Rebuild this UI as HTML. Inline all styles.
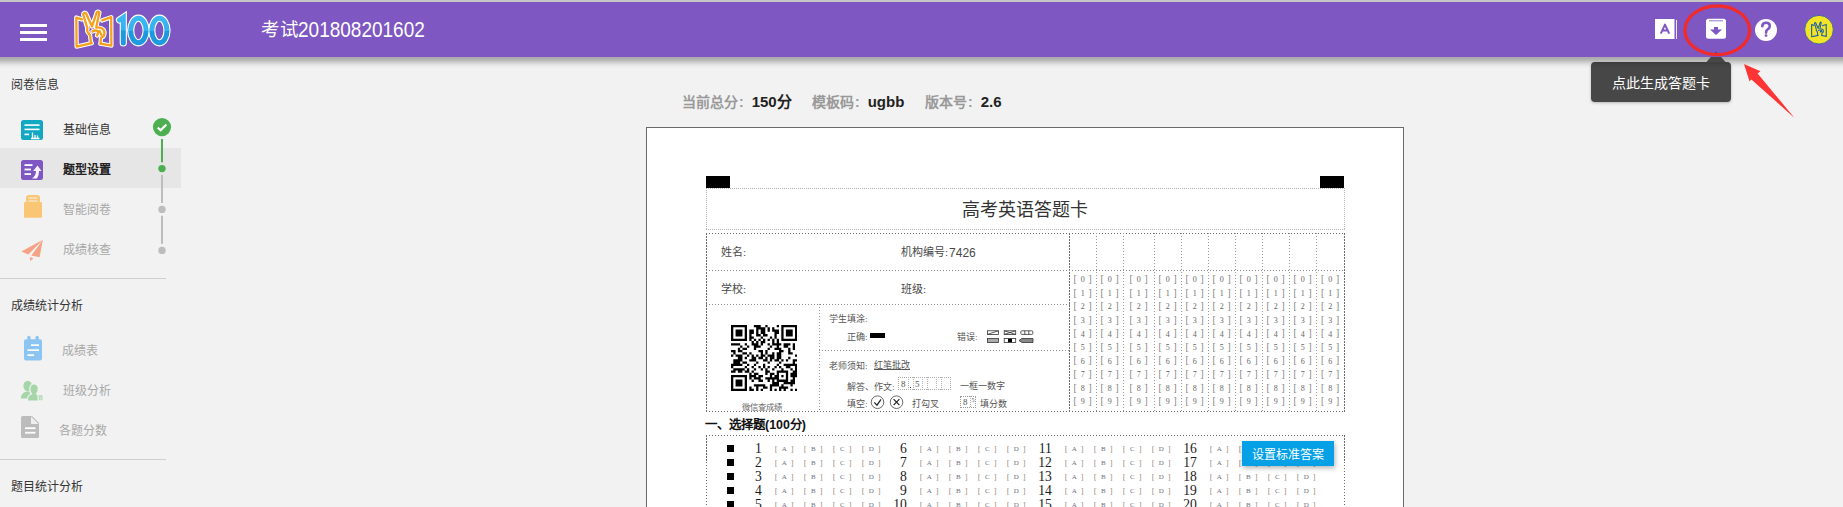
<!DOCTYPE html><html lang="zh-CN"><head><meta charset="utf-8"><style>
*{box-sizing:border-box;margin:0;padding:0}
html,body{width:1843px;height:507px;overflow:hidden;background:#f2f2f2;font-family:"Liberation Sans",sans-serif;position:relative}
div,span,svg{position:absolute}
.t{white-space:nowrap;line-height:1}
#hdr{left:-10px;top:2px;width:1863px;height:55px;background:#7e57c2;box-shadow:0 5px 6px rgba(0,0,0,.32);z-index:2}
.bar{left:30px;width:27px;height:3px;background:#fff}
.sbh{left:11px;font-size:12px;color:#333}
.item{font-size:12px}
.div{left:0;width:166px;height:1px;background:#cfcfcf}
.hd1{height:1px;background:repeating-linear-gradient(90deg,#b4b4b4 0 1px,transparent 1px 2px)}
.vd1{width:1px;background:repeating-linear-gradient(180deg,#b4b4b4 0 1px,transparent 1px 2px)}
.hd2{height:1px;background:repeating-linear-gradient(90deg,#6a6a6a 0 1.5px,transparent 1.5px 3px)}
.vd2{width:1px;background:repeating-linear-gradient(180deg,#6a6a6a 0 1.5px,transparent 1.5px 3px)}
.hd3{height:1px;background:repeating-linear-gradient(90deg,#8c8c8c 0 1px,transparent 1px 3px)}
.vd3{width:1px;background:repeating-linear-gradient(180deg,#999 0 1px,transparent 1px 3px)}
.ser{font-family:"Liberation Serif",serif}
.dg{font-size:8px;color:#666;font-family:"Liberation Serif",serif}
.br{font-size:9.5px;color:#7a7a7a;font-family:"Liberation Serif",serif}
.obr{font-size:8.5px;color:#a08c80;font-family:"Liberation Serif",serif}
.op{font-size:7px;color:#707080;font-family:"Liberation Serif",serif}
.num{font-size:13.6px;color:#1a1a1a;font-family:"Liberation Serif",serif;text-align:right;width:30px}
.sq{width:7px;height:7px;background:#000}
</style></head><body>
<div style="left:0;top:0;width:1843px;height:2px;background:#c8c8c8"></div>
<div id="hdr">
<div class="bar" style="top:22px"></div>
<div class="bar" style="top:29px"></div>
<div class="bar" style="top:36px"></div>
</div>
<svg style="left:66px;top:5px;z-index:3" width="110" height="50" viewBox="66 5 110 50">
<g fill="none" stroke-linejoin="round" stroke-linecap="round">
<g stroke="#fff" stroke-width="4.4">
<path d="M81.8 19.4 L76.3 17.6 L76.6 46.6 L91.8 43.2"/>
<path d="M102.2 20.4 L111.2 17.2 L111.4 45.6 L100.5 43.6"/>
<path d="M91 42.5 L90 35 Q86 31 87.5 28.5 L83.2 14.5 Q83.5 12 86 13.2 L92 26.5 L96.8 12.3 Q98.2 10.8 99.4 12.5 L96.2 27.5 Q101 27.2 103.5 29.5 Q105.5 33 103.5 36.5 L101 37.8 L100.6 43.6"/>
<path d="M92.5 31.5 Q95 29.5 98.5 31.5 L97 35.5 M99.5 31 L101.5 35"/>
</g>
<g stroke="#f5a11c" stroke-width="2.3">
<path d="M81.8 19.4 L76.3 17.6 L76.6 46.6 L91.8 43.2"/>
<path d="M102.2 20.4 L111.2 17.2 L111.4 45.6 L100.5 43.6"/>
<path d="M91 42.5 L90 35 Q86 31 87.5 28.5 L83.2 14.5 Q83.5 12 86 13.2 L92 26.5 L96.8 12.3 Q98.2 10.8 99.4 12.5 L96.2 27.5 Q101 27.2 103.5 29.5 Q105.5 33 103.5 36.5 L101 37.8 L100.6 43.6"/>
<path d="M92.5 31.5 Q95 29.5 98.5 31.5 L97 35.5 M99.5 31 L101.5 35"/>
</g>
</g>
<defs><linearGradient id="bl" x1="0" y1="0" x2="0" y2="1"><stop offset="0" stop-color="#3db8f0"/><stop offset=".5" stop-color="#34b0ec"/><stop offset=".52" stop-color="#1c98dd"/><stop offset="1" stop-color="#1e9be0"/></linearGradient></defs>
<g fill="none" stroke="#fff" stroke-width="7.2" stroke-linecap="round">
<path d="M119.5 20 L123.3 17.5 L123.3 43"/>
<ellipse cx="138.4" cy="30.5" rx="7.7" ry="12.3"/>
<ellipse cx="159.4" cy="30.5" rx="7.6" ry="12.3"/>
</g>
<g fill="none" stroke="url(#bl)" stroke-width="5" stroke-linecap="round">
<path d="M119.5 20 L123.3 17.5 L123.3 43"/>
<ellipse cx="138.4" cy="30.5" rx="7.7" ry="12.3"/>
<ellipse cx="159.4" cy="30.5" rx="7.6" ry="12.3"/>
</g>
</svg>
<div class="t" style="left:260.5px;top:20.5px;color:#fff;font-size:18.5px;z-index:3">考试</div>
<div class="t" style="left:298px;top:19px;color:#fff;font-size:19px;z-index:3;transform:scaleY(1.12);transform-origin:0 0">201808201602</div>
<svg style="left:1650px;top:2px;z-index:3" width="193" height="55" viewBox="1650 2 193 55">
<rect x="1655" y="19" width="19.5" height="20" fill="#fff"/>
<rect x="1676" y="20" width="1" height="19" fill="#fff" opacity=".85"/>
<path d="M1660.8 33.6 L1665 24.6 L1669.2 33.6 M1662.4 30.4 H1667.6" stroke="#7e57c2" stroke-width="2" fill="none" stroke-linejoin="round"/>
<rect x="1706" y="18.7" width="20" height="20" rx="2.5" fill="#fff"/>
<rect x="1709" y="20.3" width="14" height="1" fill="#7e57c2" opacity=".8"/>
<path d="M1714 27 H1718 V29.5 H1722 L1716 35 L1710 29.5 H1714 Z" fill="#7e57c2"/>
<circle cx="1766" cy="30" r="11" fill="#fff"/>
<path d="M1762.3 26.3 Q1762.3 22.8 1766.2 22.8 Q1769.8 22.8 1769.8 26 Q1769.8 28.2 1767.6 29.3 Q1766.1 30.1 1766.1 32.6" stroke="#7e57c2" stroke-width="2.6" fill="none" stroke-linecap="round"/>
<circle cx="1766" cy="35.6" r="1.4" fill="#7e57c2"/>
<circle cx="1819" cy="29.7" r="14.3" fill="#f3e526" stroke="#2a5aa8" stroke-width=".8"/>
<g transform="translate(1819 29.6) scale(0.42) translate(-94 -29.5)" fill="none" stroke="#1d5fa8" stroke-width="2.6" stroke-linejoin="round" stroke-linecap="round">
<path d="M81.8 19.4 L76.3 17.6 L76.6 46.6 L91.8 43.2"/>
<path d="M102.2 20.4 L111.2 17.2 L111.4 45.6 L100.5 43.6"/>
<path d="M91 42.5 L90 35 Q86 31 87.5 28.5 L83.2 14.5 Q83.5 12 86 13.2 L92 26.5 L96.8 12.3 Q98.2 10.8 99.4 12.5 L96.2 27.5 Q101 27.2 103.5 29.5 Q105.5 33 103.5 36.5 L101 37.8 L100.6 43.6"/>
<path d="M92.5 31.5 Q95 29.5 98.5 31.5 L97 35.5 M99.5 31 L101.5 35"/>
</g>
<ellipse cx="1717.3" cy="30.2" rx="32.3" ry="24.4" fill="none" stroke="#f22a2a" stroke-width="3.3"/>
</svg>
<div style="left:1591px;top:62px;width:140px;height:40px;background:#474747;border-radius:4px;z-index:1;box-shadow:0 1px 3px rgba(0,0,0,.25)"></div>
<svg style="left:1704px;top:50px;z-index:3" width="24" height="13" viewBox="1704 50 24 13"><path d="M1706 62.5 L1710.8 57 L1721.2 57 L1726 62.5 Z" fill="#474747"/><circle cx="1716" cy="52.6" r=".9" fill="#474747" opacity=".8"/></svg>
<div class="t" style="left:1612px;top:76px;color:#fff;font-size:14px;z-index:3">点此生成答题卡</div>
<svg style="left:1735px;top:55px;z-index:3" width="70" height="70" viewBox="1735 55 70 70"><path d="M1744 64 L1760.5 71.3 L1757.6 73.4 L1794.5 118 L1751.4 79.5 L1749.5 81.3 Z" fill="#ff3535"/></svg>
<div class="t sbh" style="top:79px">阅卷信息</div>
<div style="left:0;top:148px;width:181px;height:40px;background:#e6e6e6"></div>
<div class="t item" style="left:63px;top:123.7px;color:#333;">基础信息</div>
<div class="t item" style="left:63px;top:163.5px;color:#222;font-weight:bold;">题型设置</div>
<div class="t item" style="left:63px;top:204px;color:#a8a8a8;">智能阅卷</div>
<div class="t item" style="left:63px;top:244px;color:#a8a8a8;">成绩核查</div>
<svg style="left:18px;top:116px" width="28" height="148" viewBox="18 116 28 148">
<rect x="21" y="120" width="22" height="20" rx="2.5" fill="#12a8c2"/>
<rect x="24.5" y="124.3" width="15" height="1.6" fill="#fff"/>
<rect x="24.5" y="128.6" width="15" height="1.6" fill="#fff"/>
<rect x="24.5" y="133.6" width="4.5" height="1.6" fill="#fff"/>
<path d="M31 138.5 H39.5 M32.5 138.5 V132.5 M35 138.5 V135 M37.5 138.5 V135.5" stroke="#fff" stroke-width="1.3" fill="none"/>
<rect x="21" y="160" width="22" height="20" rx="2.5" fill="#7e57c2"/>
<rect x="24.5" y="164.2" width="8" height="1.8" fill="#fff"/>
<rect x="24.5" y="168.6" width="6.5" height="1.8" fill="#fff"/>
<rect x="24.5" y="173.2" width="6.5" height="1.8" fill="#fff"/>
<path d="M37.5 165.5 L41.5 171 L39 171 Q39 176 37 178.5 L32 178.5 Q36 176 36 171 L33.2 171 Z" fill="#fff" opacity=".95"/>
<rect x="26" y="195" width="14" height="8" rx="3" fill="#f9c676"/>
<rect x="28.5" y="197.3" width="9" height="1.4" fill="#f6e6cc"/>
<rect x="28.5" y="200.3" width="9" height="1.4" fill="#f6e6cc"/>
<rect x="24" y="202" width="18" height="15.8" rx="1" fill="#f9c676"/>
<path d="M42.9 239.8 L21.3 251.4 L28.4 254.4 Z M42.9 239.8 L31.3 255.6 L39.6 257.3 Z M30 257 L33.6 258.6 L30.2 261 Z" fill="#f5a385"/>
</svg>
<svg style="left:150px;top:116px" width="24" height="140" viewBox="150 116 24 140">
<circle cx="162" cy="127.1" r="9.1" fill="#4caf50"/>
<path d="M157.7 127.5 L160.6 130.3 L166.4 124.4" stroke="#fff" stroke-width="2.2" fill="none"/>
<rect x="161" y="139" width="2" height="23.3" fill="#4caf50"/>
<circle cx="162" cy="168.6" r="3.7" fill="#4caf50"/>
<rect x="161" y="175" width="2" height="28" fill="#bdbdbd"/>
<circle cx="162" cy="209.4" r="3.7" fill="#bdbdbd"/>
<rect x="161" y="215.8" width="2" height="28" fill="#bdbdbd"/>
<circle cx="162" cy="250.4" r="3.7" fill="#bdbdbd"/>
</svg>
<div class="div" style="top:278px"></div>
<div class="t sbh" style="top:300px">成绩统计分析</div>
<div class="t item" style="left:62px;top:345px;color:#a8a8a8">成绩表</div>
<div class="t item" style="left:63px;top:384.7px;color:#a8a8a8">班级分析</div>
<div class="t item" style="left:59px;top:425px;color:#a8a8a8">各题分数</div>
<svg style="left:18px;top:334px" width="30" height="108" viewBox="18 334 30 108">
<rect x="24" y="339.3" width="18" height="21.3" rx="2" fill="#8cc5f2"/>
<rect x="27.3" y="335.8" width="3.2" height="5" rx="1.5" fill="#8cc5f2"/>
<rect x="35.5" y="335.8" width="3.2" height="5" rx="1.5" fill="#8cc5f2"/>
<rect x="31" y="344.3" width="8" height="1.7" fill="#fff"/>
<rect x="27.5" y="349.3" width="11.5" height="1.7" fill="#fff"/>
<rect x="27.5" y="354.3" width="6.5" height="1.7" fill="#fff"/>
<g fill="#a6d6a8">
<ellipse cx="27.7" cy="386" rx="4.3" ry="5.2"/>
<path d="M20.8 398.5 Q21 392.5 27 391.5 L30 391.5 L31 398.5 Z"/>
</g>
<g fill="#a6d6a8" stroke="#f2f2f2" stroke-width="1.2">
<path d="M27.3 401 Q27.3 395 31.5 394 Q29.5 391.5 29.8 388.5 Q30.3 384 34 384 Q38 384 38.3 388.5 Q38.5 391.5 36.5 394 Q38.5 394.5 38.5 397 V401 Z"/>
<rect x="38.2" y="394.6" width="4.8" height="6.2" rx=".8"/>
</g>
<path d="M39.5 397 H41.6 M39.5 399 H41.6" stroke="#fff" stroke-width=".8"/>
<path d="M21 417.5 Q21 416 22.5 416 H32 L39 423 V436.5 Q39 438 37.5 438 H22.5 Q21 438 21 436.5 Z" fill="#bcbcbc"/>
<path d="M31 416.5 V424 H38.5 Z" fill="#efefef"/>
<rect x="25" y="427.3" width="10.5" height="1.8" fill="#fff"/>
<rect x="25" y="431.8" width="10.5" height="1.8" fill="#fff"/>
</svg>
<div class="div" style="top:459px"></div>
<div class="t sbh" style="top:481px">题目统计分析</div>
<div class="t" style="left:682px;top:94px;font-size:14px;font-weight:bold;color:#999">当前总分<span style="position:static;margin-left:1px">:</span><span style="position:static;color:#222;font-size:15px;margin-left:8px">150分</span></div>
<div class="t" style="left:812px;top:94px;font-size:14px;font-weight:bold;color:#999">模板码<span style="position:static;margin-left:1px">:</span><span style="position:static;color:#222;font-size:15px;margin-left:8px">ugbb</span></div>
<div class="t" style="left:925px;top:94px;font-size:14px;font-weight:bold;color:#999">版本号<span style="position:static;margin-left:1px">:</span><span style="position:static;color:#222;font-size:15px;margin-left:8px">2.6</span></div>
<div style="left:646px;top:127px;width:758px;height:390px;background:#fff;border:1px solid #6a6a6a"></div>
<div style="left:706px;top:176px;width:24px;height:12px;background:#000"></div>
<div style="left:1320px;top:176px;width:24px;height:12px;background:#000"></div>
<div class="hd1" style="left:706px;top:188px;width:639px"></div>
<div class="hd1" style="left:706px;top:229px;width:639px"></div>
<div class="vd1" style="left:706px;top:188px;height:42px"></div>
<div class="vd1" style="left:1344px;top:188px;height:42px"></div>
<div class="t ser" style="left:962px;top:201px;font-size:18px;color:#333;width:126px;text-align:center">高考英语答题卡</div>
<div class="hd2" style="left:706px;top:233px;width:639px"></div>
<div class="hd2" style="left:706px;top:411px;width:639px"></div>
<div class="vd2" style="left:706px;top:233px;height:179px"></div>
<div class="vd2" style="left:1344px;top:233px;height:179px"></div>
<div class="vd2" style="left:1069px;top:233px;height:179px"></div>
<div class="hd3" style="left:706px;top:270px;width:639px"></div>
<div class="hd3" style="left:706px;top:304px;width:364px"></div>
<div class="vd3" style="left:819px;top:304px;height:108px"></div>
<div class="hd3" style="left:819px;top:350px;width:251px"></div>
<div class="vd3" style="left:1096px;top:233px;height:179px"></div>
<div class="vd3" style="left:1123px;top:233px;height:179px"></div>
<div class="vd3" style="left:1154px;top:233px;height:179px"></div>
<div class="vd3" style="left:1181px;top:233px;height:179px"></div>
<div class="vd3" style="left:1208px;top:233px;height:179px"></div>
<div class="vd3" style="left:1235px;top:233px;height:179px"></div>
<div class="vd3" style="left:1262px;top:233px;height:179px"></div>
<div class="vd3" style="left:1289px;top:233px;height:179px"></div>
<div class="vd3" style="left:1316px;top:233px;height:179px"></div>
<div class="t br" style="left:1073.6px;top:275.1px">[</div><div class="t dg" style="left:1077.8px;top:276.3px;width:10px;text-align:center">0</div><div class="t br" style="left:1088.6px;top:275.1px">]</div>
<div class="t br" style="left:1073.6px;top:288.6px">[</div><div class="t dg" style="left:1077.8px;top:289.8px;width:10px;text-align:center">1</div><div class="t br" style="left:1088.6px;top:288.6px">]</div>
<div class="t br" style="left:1073.6px;top:302.2px">[</div><div class="t dg" style="left:1077.8px;top:303.4px;width:10px;text-align:center">2</div><div class="t br" style="left:1088.6px;top:302.2px">]</div>
<div class="t br" style="left:1073.6px;top:315.7px">[</div><div class="t dg" style="left:1077.8px;top:316.9px;width:10px;text-align:center">3</div><div class="t br" style="left:1088.6px;top:315.7px">]</div>
<div class="t br" style="left:1073.6px;top:329.3px">[</div><div class="t dg" style="left:1077.8px;top:330.5px;width:10px;text-align:center">4</div><div class="t br" style="left:1088.6px;top:329.3px">]</div>
<div class="t br" style="left:1073.6px;top:342.8px">[</div><div class="t dg" style="left:1077.8px;top:344.0px;width:10px;text-align:center">5</div><div class="t br" style="left:1088.6px;top:342.8px">]</div>
<div class="t br" style="left:1073.6px;top:356.4px">[</div><div class="t dg" style="left:1077.8px;top:357.6px;width:10px;text-align:center">6</div><div class="t br" style="left:1088.6px;top:356.4px">]</div>
<div class="t br" style="left:1073.6px;top:369.9px">[</div><div class="t dg" style="left:1077.8px;top:371.1px;width:10px;text-align:center">7</div><div class="t br" style="left:1088.6px;top:369.9px">]</div>
<div class="t br" style="left:1073.6px;top:383.5px">[</div><div class="t dg" style="left:1077.8px;top:384.7px;width:10px;text-align:center">8</div><div class="t br" style="left:1088.6px;top:383.5px">]</div>
<div class="t br" style="left:1073.6px;top:397.0px">[</div><div class="t dg" style="left:1077.8px;top:398.2px;width:10px;text-align:center">9</div><div class="t br" style="left:1088.6px;top:397.0px">]</div>
<div class="t br" style="left:1100.6px;top:275.1px">[</div><div class="t dg" style="left:1104.8px;top:276.3px;width:10px;text-align:center">0</div><div class="t br" style="left:1115.6px;top:275.1px">]</div>
<div class="t br" style="left:1100.6px;top:288.6px">[</div><div class="t dg" style="left:1104.8px;top:289.8px;width:10px;text-align:center">1</div><div class="t br" style="left:1115.6px;top:288.6px">]</div>
<div class="t br" style="left:1100.6px;top:302.2px">[</div><div class="t dg" style="left:1104.8px;top:303.4px;width:10px;text-align:center">2</div><div class="t br" style="left:1115.6px;top:302.2px">]</div>
<div class="t br" style="left:1100.6px;top:315.7px">[</div><div class="t dg" style="left:1104.8px;top:316.9px;width:10px;text-align:center">3</div><div class="t br" style="left:1115.6px;top:315.7px">]</div>
<div class="t br" style="left:1100.6px;top:329.3px">[</div><div class="t dg" style="left:1104.8px;top:330.5px;width:10px;text-align:center">4</div><div class="t br" style="left:1115.6px;top:329.3px">]</div>
<div class="t br" style="left:1100.6px;top:342.8px">[</div><div class="t dg" style="left:1104.8px;top:344.0px;width:10px;text-align:center">5</div><div class="t br" style="left:1115.6px;top:342.8px">]</div>
<div class="t br" style="left:1100.6px;top:356.4px">[</div><div class="t dg" style="left:1104.8px;top:357.6px;width:10px;text-align:center">6</div><div class="t br" style="left:1115.6px;top:356.4px">]</div>
<div class="t br" style="left:1100.6px;top:369.9px">[</div><div class="t dg" style="left:1104.8px;top:371.1px;width:10px;text-align:center">7</div><div class="t br" style="left:1115.6px;top:369.9px">]</div>
<div class="t br" style="left:1100.6px;top:383.5px">[</div><div class="t dg" style="left:1104.8px;top:384.7px;width:10px;text-align:center">8</div><div class="t br" style="left:1115.6px;top:383.5px">]</div>
<div class="t br" style="left:1100.6px;top:397.0px">[</div><div class="t dg" style="left:1104.8px;top:398.2px;width:10px;text-align:center">9</div><div class="t br" style="left:1115.6px;top:397.0px">]</div>
<div class="t br" style="left:1129.6px;top:275.1px">[</div><div class="t dg" style="left:1133.8px;top:276.3px;width:10px;text-align:center">0</div><div class="t br" style="left:1144.6px;top:275.1px">]</div>
<div class="t br" style="left:1129.6px;top:288.6px">[</div><div class="t dg" style="left:1133.8px;top:289.8px;width:10px;text-align:center">1</div><div class="t br" style="left:1144.6px;top:288.6px">]</div>
<div class="t br" style="left:1129.6px;top:302.2px">[</div><div class="t dg" style="left:1133.8px;top:303.4px;width:10px;text-align:center">2</div><div class="t br" style="left:1144.6px;top:302.2px">]</div>
<div class="t br" style="left:1129.6px;top:315.7px">[</div><div class="t dg" style="left:1133.8px;top:316.9px;width:10px;text-align:center">3</div><div class="t br" style="left:1144.6px;top:315.7px">]</div>
<div class="t br" style="left:1129.6px;top:329.3px">[</div><div class="t dg" style="left:1133.8px;top:330.5px;width:10px;text-align:center">4</div><div class="t br" style="left:1144.6px;top:329.3px">]</div>
<div class="t br" style="left:1129.6px;top:342.8px">[</div><div class="t dg" style="left:1133.8px;top:344.0px;width:10px;text-align:center">5</div><div class="t br" style="left:1144.6px;top:342.8px">]</div>
<div class="t br" style="left:1129.6px;top:356.4px">[</div><div class="t dg" style="left:1133.8px;top:357.6px;width:10px;text-align:center">6</div><div class="t br" style="left:1144.6px;top:356.4px">]</div>
<div class="t br" style="left:1129.6px;top:369.9px">[</div><div class="t dg" style="left:1133.8px;top:371.1px;width:10px;text-align:center">7</div><div class="t br" style="left:1144.6px;top:369.9px">]</div>
<div class="t br" style="left:1129.6px;top:383.5px">[</div><div class="t dg" style="left:1133.8px;top:384.7px;width:10px;text-align:center">8</div><div class="t br" style="left:1144.6px;top:383.5px">]</div>
<div class="t br" style="left:1129.6px;top:397.0px">[</div><div class="t dg" style="left:1133.8px;top:398.2px;width:10px;text-align:center">9</div><div class="t br" style="left:1144.6px;top:397.0px">]</div>
<div class="t br" style="left:1158.6px;top:275.1px">[</div><div class="t dg" style="left:1162.8px;top:276.3px;width:10px;text-align:center">0</div><div class="t br" style="left:1173.6px;top:275.1px">]</div>
<div class="t br" style="left:1158.6px;top:288.6px">[</div><div class="t dg" style="left:1162.8px;top:289.8px;width:10px;text-align:center">1</div><div class="t br" style="left:1173.6px;top:288.6px">]</div>
<div class="t br" style="left:1158.6px;top:302.2px">[</div><div class="t dg" style="left:1162.8px;top:303.4px;width:10px;text-align:center">2</div><div class="t br" style="left:1173.6px;top:302.2px">]</div>
<div class="t br" style="left:1158.6px;top:315.7px">[</div><div class="t dg" style="left:1162.8px;top:316.9px;width:10px;text-align:center">3</div><div class="t br" style="left:1173.6px;top:315.7px">]</div>
<div class="t br" style="left:1158.6px;top:329.3px">[</div><div class="t dg" style="left:1162.8px;top:330.5px;width:10px;text-align:center">4</div><div class="t br" style="left:1173.6px;top:329.3px">]</div>
<div class="t br" style="left:1158.6px;top:342.8px">[</div><div class="t dg" style="left:1162.8px;top:344.0px;width:10px;text-align:center">5</div><div class="t br" style="left:1173.6px;top:342.8px">]</div>
<div class="t br" style="left:1158.6px;top:356.4px">[</div><div class="t dg" style="left:1162.8px;top:357.6px;width:10px;text-align:center">6</div><div class="t br" style="left:1173.6px;top:356.4px">]</div>
<div class="t br" style="left:1158.6px;top:369.9px">[</div><div class="t dg" style="left:1162.8px;top:371.1px;width:10px;text-align:center">7</div><div class="t br" style="left:1173.6px;top:369.9px">]</div>
<div class="t br" style="left:1158.6px;top:383.5px">[</div><div class="t dg" style="left:1162.8px;top:384.7px;width:10px;text-align:center">8</div><div class="t br" style="left:1173.6px;top:383.5px">]</div>
<div class="t br" style="left:1158.6px;top:397.0px">[</div><div class="t dg" style="left:1162.8px;top:398.2px;width:10px;text-align:center">9</div><div class="t br" style="left:1173.6px;top:397.0px">]</div>
<div class="t br" style="left:1185.6px;top:275.1px">[</div><div class="t dg" style="left:1189.8px;top:276.3px;width:10px;text-align:center">0</div><div class="t br" style="left:1200.6px;top:275.1px">]</div>
<div class="t br" style="left:1185.6px;top:288.6px">[</div><div class="t dg" style="left:1189.8px;top:289.8px;width:10px;text-align:center">1</div><div class="t br" style="left:1200.6px;top:288.6px">]</div>
<div class="t br" style="left:1185.6px;top:302.2px">[</div><div class="t dg" style="left:1189.8px;top:303.4px;width:10px;text-align:center">2</div><div class="t br" style="left:1200.6px;top:302.2px">]</div>
<div class="t br" style="left:1185.6px;top:315.7px">[</div><div class="t dg" style="left:1189.8px;top:316.9px;width:10px;text-align:center">3</div><div class="t br" style="left:1200.6px;top:315.7px">]</div>
<div class="t br" style="left:1185.6px;top:329.3px">[</div><div class="t dg" style="left:1189.8px;top:330.5px;width:10px;text-align:center">4</div><div class="t br" style="left:1200.6px;top:329.3px">]</div>
<div class="t br" style="left:1185.6px;top:342.8px">[</div><div class="t dg" style="left:1189.8px;top:344.0px;width:10px;text-align:center">5</div><div class="t br" style="left:1200.6px;top:342.8px">]</div>
<div class="t br" style="left:1185.6px;top:356.4px">[</div><div class="t dg" style="left:1189.8px;top:357.6px;width:10px;text-align:center">6</div><div class="t br" style="left:1200.6px;top:356.4px">]</div>
<div class="t br" style="left:1185.6px;top:369.9px">[</div><div class="t dg" style="left:1189.8px;top:371.1px;width:10px;text-align:center">7</div><div class="t br" style="left:1200.6px;top:369.9px">]</div>
<div class="t br" style="left:1185.6px;top:383.5px">[</div><div class="t dg" style="left:1189.8px;top:384.7px;width:10px;text-align:center">8</div><div class="t br" style="left:1200.6px;top:383.5px">]</div>
<div class="t br" style="left:1185.6px;top:397.0px">[</div><div class="t dg" style="left:1189.8px;top:398.2px;width:10px;text-align:center">9</div><div class="t br" style="left:1200.6px;top:397.0px">]</div>
<div class="t br" style="left:1212.6px;top:275.1px">[</div><div class="t dg" style="left:1216.8px;top:276.3px;width:10px;text-align:center">0</div><div class="t br" style="left:1227.6px;top:275.1px">]</div>
<div class="t br" style="left:1212.6px;top:288.6px">[</div><div class="t dg" style="left:1216.8px;top:289.8px;width:10px;text-align:center">1</div><div class="t br" style="left:1227.6px;top:288.6px">]</div>
<div class="t br" style="left:1212.6px;top:302.2px">[</div><div class="t dg" style="left:1216.8px;top:303.4px;width:10px;text-align:center">2</div><div class="t br" style="left:1227.6px;top:302.2px">]</div>
<div class="t br" style="left:1212.6px;top:315.7px">[</div><div class="t dg" style="left:1216.8px;top:316.9px;width:10px;text-align:center">3</div><div class="t br" style="left:1227.6px;top:315.7px">]</div>
<div class="t br" style="left:1212.6px;top:329.3px">[</div><div class="t dg" style="left:1216.8px;top:330.5px;width:10px;text-align:center">4</div><div class="t br" style="left:1227.6px;top:329.3px">]</div>
<div class="t br" style="left:1212.6px;top:342.8px">[</div><div class="t dg" style="left:1216.8px;top:344.0px;width:10px;text-align:center">5</div><div class="t br" style="left:1227.6px;top:342.8px">]</div>
<div class="t br" style="left:1212.6px;top:356.4px">[</div><div class="t dg" style="left:1216.8px;top:357.6px;width:10px;text-align:center">6</div><div class="t br" style="left:1227.6px;top:356.4px">]</div>
<div class="t br" style="left:1212.6px;top:369.9px">[</div><div class="t dg" style="left:1216.8px;top:371.1px;width:10px;text-align:center">7</div><div class="t br" style="left:1227.6px;top:369.9px">]</div>
<div class="t br" style="left:1212.6px;top:383.5px">[</div><div class="t dg" style="left:1216.8px;top:384.7px;width:10px;text-align:center">8</div><div class="t br" style="left:1227.6px;top:383.5px">]</div>
<div class="t br" style="left:1212.6px;top:397.0px">[</div><div class="t dg" style="left:1216.8px;top:398.2px;width:10px;text-align:center">9</div><div class="t br" style="left:1227.6px;top:397.0px">]</div>
<div class="t br" style="left:1239.6px;top:275.1px">[</div><div class="t dg" style="left:1243.8px;top:276.3px;width:10px;text-align:center">0</div><div class="t br" style="left:1254.6px;top:275.1px">]</div>
<div class="t br" style="left:1239.6px;top:288.6px">[</div><div class="t dg" style="left:1243.8px;top:289.8px;width:10px;text-align:center">1</div><div class="t br" style="left:1254.6px;top:288.6px">]</div>
<div class="t br" style="left:1239.6px;top:302.2px">[</div><div class="t dg" style="left:1243.8px;top:303.4px;width:10px;text-align:center">2</div><div class="t br" style="left:1254.6px;top:302.2px">]</div>
<div class="t br" style="left:1239.6px;top:315.7px">[</div><div class="t dg" style="left:1243.8px;top:316.9px;width:10px;text-align:center">3</div><div class="t br" style="left:1254.6px;top:315.7px">]</div>
<div class="t br" style="left:1239.6px;top:329.3px">[</div><div class="t dg" style="left:1243.8px;top:330.5px;width:10px;text-align:center">4</div><div class="t br" style="left:1254.6px;top:329.3px">]</div>
<div class="t br" style="left:1239.6px;top:342.8px">[</div><div class="t dg" style="left:1243.8px;top:344.0px;width:10px;text-align:center">5</div><div class="t br" style="left:1254.6px;top:342.8px">]</div>
<div class="t br" style="left:1239.6px;top:356.4px">[</div><div class="t dg" style="left:1243.8px;top:357.6px;width:10px;text-align:center">6</div><div class="t br" style="left:1254.6px;top:356.4px">]</div>
<div class="t br" style="left:1239.6px;top:369.9px">[</div><div class="t dg" style="left:1243.8px;top:371.1px;width:10px;text-align:center">7</div><div class="t br" style="left:1254.6px;top:369.9px">]</div>
<div class="t br" style="left:1239.6px;top:383.5px">[</div><div class="t dg" style="left:1243.8px;top:384.7px;width:10px;text-align:center">8</div><div class="t br" style="left:1254.6px;top:383.5px">]</div>
<div class="t br" style="left:1239.6px;top:397.0px">[</div><div class="t dg" style="left:1243.8px;top:398.2px;width:10px;text-align:center">9</div><div class="t br" style="left:1254.6px;top:397.0px">]</div>
<div class="t br" style="left:1266.6px;top:275.1px">[</div><div class="t dg" style="left:1270.8px;top:276.3px;width:10px;text-align:center">0</div><div class="t br" style="left:1281.6px;top:275.1px">]</div>
<div class="t br" style="left:1266.6px;top:288.6px">[</div><div class="t dg" style="left:1270.8px;top:289.8px;width:10px;text-align:center">1</div><div class="t br" style="left:1281.6px;top:288.6px">]</div>
<div class="t br" style="left:1266.6px;top:302.2px">[</div><div class="t dg" style="left:1270.8px;top:303.4px;width:10px;text-align:center">2</div><div class="t br" style="left:1281.6px;top:302.2px">]</div>
<div class="t br" style="left:1266.6px;top:315.7px">[</div><div class="t dg" style="left:1270.8px;top:316.9px;width:10px;text-align:center">3</div><div class="t br" style="left:1281.6px;top:315.7px">]</div>
<div class="t br" style="left:1266.6px;top:329.3px">[</div><div class="t dg" style="left:1270.8px;top:330.5px;width:10px;text-align:center">4</div><div class="t br" style="left:1281.6px;top:329.3px">]</div>
<div class="t br" style="left:1266.6px;top:342.8px">[</div><div class="t dg" style="left:1270.8px;top:344.0px;width:10px;text-align:center">5</div><div class="t br" style="left:1281.6px;top:342.8px">]</div>
<div class="t br" style="left:1266.6px;top:356.4px">[</div><div class="t dg" style="left:1270.8px;top:357.6px;width:10px;text-align:center">6</div><div class="t br" style="left:1281.6px;top:356.4px">]</div>
<div class="t br" style="left:1266.6px;top:369.9px">[</div><div class="t dg" style="left:1270.8px;top:371.1px;width:10px;text-align:center">7</div><div class="t br" style="left:1281.6px;top:369.9px">]</div>
<div class="t br" style="left:1266.6px;top:383.5px">[</div><div class="t dg" style="left:1270.8px;top:384.7px;width:10px;text-align:center">8</div><div class="t br" style="left:1281.6px;top:383.5px">]</div>
<div class="t br" style="left:1266.6px;top:397.0px">[</div><div class="t dg" style="left:1270.8px;top:398.2px;width:10px;text-align:center">9</div><div class="t br" style="left:1281.6px;top:397.0px">]</div>
<div class="t br" style="left:1293.6px;top:275.1px">[</div><div class="t dg" style="left:1297.8px;top:276.3px;width:10px;text-align:center">0</div><div class="t br" style="left:1308.6px;top:275.1px">]</div>
<div class="t br" style="left:1293.6px;top:288.6px">[</div><div class="t dg" style="left:1297.8px;top:289.8px;width:10px;text-align:center">1</div><div class="t br" style="left:1308.6px;top:288.6px">]</div>
<div class="t br" style="left:1293.6px;top:302.2px">[</div><div class="t dg" style="left:1297.8px;top:303.4px;width:10px;text-align:center">2</div><div class="t br" style="left:1308.6px;top:302.2px">]</div>
<div class="t br" style="left:1293.6px;top:315.7px">[</div><div class="t dg" style="left:1297.8px;top:316.9px;width:10px;text-align:center">3</div><div class="t br" style="left:1308.6px;top:315.7px">]</div>
<div class="t br" style="left:1293.6px;top:329.3px">[</div><div class="t dg" style="left:1297.8px;top:330.5px;width:10px;text-align:center">4</div><div class="t br" style="left:1308.6px;top:329.3px">]</div>
<div class="t br" style="left:1293.6px;top:342.8px">[</div><div class="t dg" style="left:1297.8px;top:344.0px;width:10px;text-align:center">5</div><div class="t br" style="left:1308.6px;top:342.8px">]</div>
<div class="t br" style="left:1293.6px;top:356.4px">[</div><div class="t dg" style="left:1297.8px;top:357.6px;width:10px;text-align:center">6</div><div class="t br" style="left:1308.6px;top:356.4px">]</div>
<div class="t br" style="left:1293.6px;top:369.9px">[</div><div class="t dg" style="left:1297.8px;top:371.1px;width:10px;text-align:center">7</div><div class="t br" style="left:1308.6px;top:369.9px">]</div>
<div class="t br" style="left:1293.6px;top:383.5px">[</div><div class="t dg" style="left:1297.8px;top:384.7px;width:10px;text-align:center">8</div><div class="t br" style="left:1308.6px;top:383.5px">]</div>
<div class="t br" style="left:1293.6px;top:397.0px">[</div><div class="t dg" style="left:1297.8px;top:398.2px;width:10px;text-align:center">9</div><div class="t br" style="left:1308.6px;top:397.0px">]</div>
<div class="t br" style="left:1321.1px;top:275.1px">[</div><div class="t dg" style="left:1325.3px;top:276.3px;width:10px;text-align:center">0</div><div class="t br" style="left:1336.1px;top:275.1px">]</div>
<div class="t br" style="left:1321.1px;top:288.6px">[</div><div class="t dg" style="left:1325.3px;top:289.8px;width:10px;text-align:center">1</div><div class="t br" style="left:1336.1px;top:288.6px">]</div>
<div class="t br" style="left:1321.1px;top:302.2px">[</div><div class="t dg" style="left:1325.3px;top:303.4px;width:10px;text-align:center">2</div><div class="t br" style="left:1336.1px;top:302.2px">]</div>
<div class="t br" style="left:1321.1px;top:315.7px">[</div><div class="t dg" style="left:1325.3px;top:316.9px;width:10px;text-align:center">3</div><div class="t br" style="left:1336.1px;top:315.7px">]</div>
<div class="t br" style="left:1321.1px;top:329.3px">[</div><div class="t dg" style="left:1325.3px;top:330.5px;width:10px;text-align:center">4</div><div class="t br" style="left:1336.1px;top:329.3px">]</div>
<div class="t br" style="left:1321.1px;top:342.8px">[</div><div class="t dg" style="left:1325.3px;top:344.0px;width:10px;text-align:center">5</div><div class="t br" style="left:1336.1px;top:342.8px">]</div>
<div class="t br" style="left:1321.1px;top:356.4px">[</div><div class="t dg" style="left:1325.3px;top:357.6px;width:10px;text-align:center">6</div><div class="t br" style="left:1336.1px;top:356.4px">]</div>
<div class="t br" style="left:1321.1px;top:369.9px">[</div><div class="t dg" style="left:1325.3px;top:371.1px;width:10px;text-align:center">7</div><div class="t br" style="left:1336.1px;top:369.9px">]</div>
<div class="t br" style="left:1321.1px;top:383.5px">[</div><div class="t dg" style="left:1325.3px;top:384.7px;width:10px;text-align:center">8</div><div class="t br" style="left:1336.1px;top:383.5px">]</div>
<div class="t br" style="left:1321.1px;top:397.0px">[</div><div class="t dg" style="left:1325.3px;top:398.2px;width:10px;text-align:center">9</div><div class="t br" style="left:1336.1px;top:397.0px">]</div>
<div class="t ser" style="left:721px;top:247px;font-size:11px;color:#484848">姓名:</div>
<div class="t ser" style="left:901px;top:247px;font-size:11px;color:#484848">机构编号:<span style="position:static;font-family:Liberation Sans;font-size:12px;margin-left:1px;vertical-align:-1px">7426</span></div>
<div class="t ser" style="left:721px;top:284px;font-size:11px;color:#484848">学校:</div>
<div class="t ser" style="left:901px;top:284px;font-size:11px;color:#484848">班级:</div>
<svg style="left:731px;top:324.7px" width="66.3" height="66" viewBox="0 0 29 29" preserveAspectRatio="none"><path d="M0 0h1v1h-1zM1 0h1v1h-1zM2 0h1v1h-1zM3 0h1v1h-1zM4 0h1v1h-1zM5 0h1v1h-1zM6 0h1v1h-1zM10 0h1v1h-1zM11 0h1v1h-1zM12 0h1v1h-1zM15 0h1v1h-1zM20 0h1v1h-1zM22 0h1v1h-1zM23 0h1v1h-1zM24 0h1v1h-1zM25 0h1v1h-1zM26 0h1v1h-1zM27 0h1v1h-1zM28 0h1v1h-1zM0 1h1v1h-1zM6 1h1v1h-1zM11 1h1v1h-1zM12 1h1v1h-1zM13 1h1v1h-1zM14 1h1v1h-1zM16 1h1v1h-1zM18 1h1v1h-1zM22 1h1v1h-1zM28 1h1v1h-1zM0 2h1v1h-1zM2 2h1v1h-1zM3 2h1v1h-1zM4 2h1v1h-1zM6 2h1v1h-1zM8 2h1v1h-1zM9 2h1v1h-1zM11 2h1v1h-1zM13 2h1v1h-1zM14 2h1v1h-1zM16 2h1v1h-1zM18 2h1v1h-1zM19 2h1v1h-1zM20 2h1v1h-1zM22 2h1v1h-1zM24 2h1v1h-1zM25 2h1v1h-1zM26 2h1v1h-1zM28 2h1v1h-1zM0 3h1v1h-1zM2 3h1v1h-1zM3 3h1v1h-1zM4 3h1v1h-1zM6 3h1v1h-1zM8 3h1v1h-1zM9 3h1v1h-1zM11 3h1v1h-1zM13 3h1v1h-1zM14 3h1v1h-1zM19 3h1v1h-1zM20 3h1v1h-1zM22 3h1v1h-1zM24 3h1v1h-1zM25 3h1v1h-1zM26 3h1v1h-1zM28 3h1v1h-1zM0 4h1v1h-1zM2 4h1v1h-1zM3 4h1v1h-1zM4 4h1v1h-1zM6 4h1v1h-1zM8 4h1v1h-1zM11 4h1v1h-1zM12 4h1v1h-1zM14 4h1v1h-1zM15 4h1v1h-1zM19 4h1v1h-1zM22 4h1v1h-1zM24 4h1v1h-1zM25 4h1v1h-1zM26 4h1v1h-1zM28 4h1v1h-1zM0 5h1v1h-1zM6 5h1v1h-1zM8 5h1v1h-1zM9 5h1v1h-1zM13 5h1v1h-1zM17 5h1v1h-1zM19 5h1v1h-1zM22 5h1v1h-1zM28 5h1v1h-1zM0 6h1v1h-1zM1 6h1v1h-1zM2 6h1v1h-1zM3 6h1v1h-1zM4 6h1v1h-1zM5 6h1v1h-1zM6 6h1v1h-1zM8 6h1v1h-1zM10 6h1v1h-1zM12 6h1v1h-1zM14 6h1v1h-1zM16 6h1v1h-1zM18 6h1v1h-1zM20 6h1v1h-1zM22 6h1v1h-1zM23 6h1v1h-1zM24 6h1v1h-1zM25 6h1v1h-1zM26 6h1v1h-1zM27 6h1v1h-1zM28 6h1v1h-1zM9 7h1v1h-1zM11 7h1v1h-1zM13 7h1v1h-1zM14 7h1v1h-1zM18 7h1v1h-1zM20 7h1v1h-1zM0 8h1v1h-1zM1 8h1v1h-1zM2 8h1v1h-1zM3 8h1v1h-1zM6 8h1v1h-1zM9 8h1v1h-1zM10 8h1v1h-1zM11 8h1v1h-1zM13 8h1v1h-1zM16 8h1v1h-1zM18 8h1v1h-1zM19 8h1v1h-1zM20 8h1v1h-1zM21 8h1v1h-1zM23 8h1v1h-1zM24 8h1v1h-1zM25 8h1v1h-1zM27 8h1v1h-1zM4 9h1v1h-1zM7 9h1v1h-1zM10 9h1v1h-1zM11 9h1v1h-1zM12 9h1v1h-1zM17 9h1v1h-1zM20 9h1v1h-1zM23 9h1v1h-1zM24 9h1v1h-1zM27 9h1v1h-1zM3 10h1v1h-1zM5 10h1v1h-1zM6 10h1v1h-1zM10 10h1v1h-1zM16 10h1v1h-1zM19 10h1v1h-1zM20 10h1v1h-1zM21 10h1v1h-1zM25 10h1v1h-1zM27 10h1v1h-1zM0 11h1v1h-1zM1 11h1v1h-1zM3 11h1v1h-1zM4 11h1v1h-1zM12 11h1v1h-1zM13 11h1v1h-1zM15 11h1v1h-1zM21 11h1v1h-1zM22 11h1v1h-1zM25 11h1v1h-1zM1 12h1v1h-1zM5 12h1v1h-1zM6 12h1v1h-1zM8 12h1v1h-1zM13 12h1v1h-1zM15 12h1v1h-1zM18 12h1v1h-1zM20 12h1v1h-1zM21 12h1v1h-1zM25 12h1v1h-1zM26 12h1v1h-1zM0 13h1v1h-1zM2 13h1v1h-1zM3 13h1v1h-1zM4 13h1v1h-1zM7 13h1v1h-1zM9 13h1v1h-1zM11 13h1v1h-1zM13 13h1v1h-1zM14 13h1v1h-1zM16 13h1v1h-1zM17 13h1v1h-1zM18 13h1v1h-1zM20 13h1v1h-1zM21 13h1v1h-1zM28 13h1v1h-1zM3 14h1v1h-1zM4 14h1v1h-1zM6 14h1v1h-1zM9 14h1v1h-1zM10 14h1v1h-1zM12 14h1v1h-1zM13 14h1v1h-1zM15 14h1v1h-1zM17 14h1v1h-1zM18 14h1v1h-1zM20 14h1v1h-1zM21 14h1v1h-1zM25 14h1v1h-1zM1 15h1v1h-1zM2 15h1v1h-1zM3 15h1v1h-1zM4 15h1v1h-1zM8 15h1v1h-1zM9 15h1v1h-1zM10 15h1v1h-1zM14 15h1v1h-1zM15 15h1v1h-1zM17 15h1v1h-1zM19 15h1v1h-1zM20 15h1v1h-1zM22 15h1v1h-1zM24 15h1v1h-1zM27 15h1v1h-1zM28 15h1v1h-1zM1 16h1v1h-1zM2 16h1v1h-1zM3 16h1v1h-1zM5 16h1v1h-1zM6 16h1v1h-1zM11 16h1v1h-1zM16 16h1v1h-1zM21 16h1v1h-1zM27 16h1v1h-1zM0 17h1v1h-1zM1 17h1v1h-1zM2 17h1v1h-1zM3 17h1v1h-1zM4 17h1v1h-1zM7 17h1v1h-1zM10 17h1v1h-1zM14 17h1v1h-1zM20 17h1v1h-1zM23 17h1v1h-1zM24 17h1v1h-1zM25 17h1v1h-1zM26 17h1v1h-1zM27 17h1v1h-1zM28 17h1v1h-1zM0 18h1v1h-1zM6 18h1v1h-1zM9 18h1v1h-1zM12 18h1v1h-1zM14 18h1v1h-1zM16 18h1v1h-1zM19 18h1v1h-1zM21 18h1v1h-1zM24 18h1v1h-1zM25 18h1v1h-1zM28 18h1v1h-1zM1 19h1v1h-1zM2 19h1v1h-1zM3 19h1v1h-1zM4 19h1v1h-1zM5 19h1v1h-1zM7 19h1v1h-1zM10 19h1v1h-1zM13 19h1v1h-1zM15 19h1v1h-1zM18 19h1v1h-1zM22 19h1v1h-1zM26 19h1v1h-1zM28 19h1v1h-1zM0 20h1v1h-1zM1 20h1v1h-1zM3 20h1v1h-1zM4 20h1v1h-1zM6 20h1v1h-1zM7 20h1v1h-1zM9 20h1v1h-1zM15 20h1v1h-1zM16 20h1v1h-1zM20 20h1v1h-1zM21 20h1v1h-1zM22 20h1v1h-1zM23 20h1v1h-1zM24 20h1v1h-1zM27 20h1v1h-1zM28 20h1v1h-1zM8 21h1v1h-1zM10 21h1v1h-1zM11 21h1v1h-1zM15 21h1v1h-1zM17 21h1v1h-1zM18 21h1v1h-1zM20 21h1v1h-1zM24 21h1v1h-1zM26 21h1v1h-1zM27 21h1v1h-1zM28 21h1v1h-1zM0 22h1v1h-1zM1 22h1v1h-1zM2 22h1v1h-1zM3 22h1v1h-1zM4 22h1v1h-1zM5 22h1v1h-1zM6 22h1v1h-1zM8 22h1v1h-1zM9 22h1v1h-1zM10 22h1v1h-1zM12 22h1v1h-1zM13 22h1v1h-1zM17 22h1v1h-1zM19 22h1v1h-1zM20 22h1v1h-1zM22 22h1v1h-1zM24 22h1v1h-1zM26 22h1v1h-1zM27 22h1v1h-1zM28 22h1v1h-1zM0 23h1v1h-1zM6 23h1v1h-1zM8 23h1v1h-1zM10 23h1v1h-1zM11 23h1v1h-1zM12 23h1v1h-1zM15 23h1v1h-1zM16 23h1v1h-1zM17 23h1v1h-1zM18 23h1v1h-1zM19 23h1v1h-1zM20 23h1v1h-1zM24 23h1v1h-1zM27 23h1v1h-1zM0 24h1v1h-1zM2 24h1v1h-1zM3 24h1v1h-1zM4 24h1v1h-1zM6 24h1v1h-1zM9 24h1v1h-1zM12 24h1v1h-1zM13 24h1v1h-1zM16 24h1v1h-1zM18 24h1v1h-1zM20 24h1v1h-1zM21 24h1v1h-1zM22 24h1v1h-1zM23 24h1v1h-1zM24 24h1v1h-1zM26 24h1v1h-1zM27 24h1v1h-1zM0 25h1v1h-1zM2 25h1v1h-1zM3 25h1v1h-1zM4 25h1v1h-1zM6 25h1v1h-1zM18 25h1v1h-1zM19 25h1v1h-1zM20 25h1v1h-1zM23 25h1v1h-1zM24 25h1v1h-1zM25 25h1v1h-1zM26 25h1v1h-1zM27 25h1v1h-1zM0 26h1v1h-1zM2 26h1v1h-1zM3 26h1v1h-1zM4 26h1v1h-1zM6 26h1v1h-1zM10 26h1v1h-1zM11 26h1v1h-1zM12 26h1v1h-1zM13 26h1v1h-1zM14 26h1v1h-1zM17 26h1v1h-1zM18 26h1v1h-1zM19 26h1v1h-1zM20 26h1v1h-1zM22 26h1v1h-1zM26 26h1v1h-1zM0 27h1v1h-1zM6 27h1v1h-1zM8 27h1v1h-1zM11 27h1v1h-1zM14 27h1v1h-1zM15 27h1v1h-1zM17 27h1v1h-1zM21 27h1v1h-1zM22 27h1v1h-1zM23 27h1v1h-1zM24 27h1v1h-1zM0 28h1v1h-1zM1 28h1v1h-1zM2 28h1v1h-1zM3 28h1v1h-1zM4 28h1v1h-1zM5 28h1v1h-1zM6 28h1v1h-1zM8 28h1v1h-1zM9 28h1v1h-1zM11 28h1v1h-1zM13 28h1v1h-1zM17 28h1v1h-1zM19 28h1v1h-1zM21 28h1v1h-1zM23 28h1v1h-1zM26 28h1v1h-1zM28 28h1v1h-1z" fill="#000"/></svg>
<div class="t" style="left:742px;top:402.5px;font-size:8.3px;color:#666">微信查成绩</div>
<div class="t ser" style="left:829px;top:315px;font-size:9px;color:#555">学生填涂:</div>
<div class="t ser" style="left:847px;top:332.5px;font-size:9px;color:#555">正确:</div>
<div style="left:870px;top:333px;width:15px;height:5px;background:#000"></div>
<div class="t ser" style="left:957px;top:333px;font-size:9px;color:#555">错误:</div>
<svg style="left:985px;top:329px" width="50" height="16" viewBox="985 329 50 16">
<g fill="none" stroke="#333" stroke-width=".8">
<rect x="987.4" y="330.8" width="11" height="3.6"/><path d="M987.4 334.4 L998.4 330.8"/>
<rect x="1004.2" y="330.8" width="11.5" height="3.6"/><path d="M1004.2 330.8 L1015.7 334.4 M1004.2 334.4 L1015.7 330.8"/>
<rect x="1020.8" y="330.8" width="12" height="3.6" rx="1"/><path d="M1024.8 330.8 V334.4 M1028.8 330.8 V334.4"/>
<rect x="987.4" y="338.5" width="11" height="4" fill="#aaa"/>
<rect x="1004.2" y="338.5" width="11.5" height="4"/>
<path d="M1019 340.5 L1022 338.5 H1033 V342.5 H1022 Z" fill="#888"/>
</g>
<rect x="1008" y="338.8" width="4" height="3.4" fill="#000"/>
</svg>
<div class="t ser" style="left:829px;top:361.5px;font-size:9px;color:#555">老师须知:</div>
<div class="t ser" style="left:874px;top:361px;font-size:9px;color:#555;text-decoration:underline">红笔批改</div>
<div class="t ser" style="left:847px;top:382.5px;font-size:9px;color:#555">解答、作文:</div>
<div style="left:898px;top:377px;width:53px;height:13px;border:1px dotted #aaa"></div>
<div class="vd1" style="left:908px;top:377px;height:13px"></div>
<div class="vd1" style="left:913px;top:377px;height:13px"></div>
<div class="vd1" style="left:922px;top:377px;height:13px"></div>
<div class="vd1" style="left:927px;top:377px;height:13px"></div>
<div class="vd1" style="left:936px;top:377px;height:13px"></div>
<div class="vd1" style="left:941px;top:377px;height:13px"></div>
<div class="t ser" style="left:901px;top:380px;font-size:9px;color:#555">8</div>
<div class="t ser" style="left:915px;top:380px;font-size:9px;color:#555">5</div>
<div style="left:910px;top:387px;width:1px;height:1px;background:#333"></div>
<svg style="left:870px;top:395px" width="36" height="15" viewBox="870 395 36 15">
<circle cx="877.5" cy="402.2" r="6.3" fill="none" stroke="#444" stroke-width=".8"/>
<path d="M874.3 402.3 L877 405.2 L881 399.3" fill="none" stroke="#222" stroke-width="1.2"/>
<circle cx="896.5" cy="402.2" r="6.3" fill="none" stroke="#444" stroke-width=".8"/>
<path d="M893.6 399.2 L899.4 405.2 M899.4 399.2 L893.6 405.2" stroke="#222" stroke-width="1.2"/>
</svg>
<div style="left:960px;top:396px;width:16px;height:12px;border:1px dotted #999"></div>
<div class="vd1" style="left:970px;top:396px;height:12px"></div>
<div class="t ser" style="left:963px;top:398px;font-size:9px;color:#555">8</div>
<div class="t ser" style="left:971.5px;top:397px;font-size:6px;color:#555">5</div>
<div class="t ser" style="left:960px;top:381.5px;font-size:9px;color:#555">一框一数字</div>
<div class="t ser" style="left:847px;top:399.5px;font-size:9px;color:#555">填空:</div>
<div class="t ser" style="left:912px;top:400px;font-size:9px;color:#555">打勾叉</div>
<div class="t ser" style="left:980px;top:400px;font-size:9px;color:#555">填分数</div>
<div class="t" style="left:705px;top:418.5px;font-size:12.4px;font-weight:bold;color:#111">一、选择题(100分)</div>
<div class="hd2" style="left:706px;top:435px;width:639px"></div>
<div class="vd2" style="left:706px;top:435px;height:80px"></div>
<div class="vd2" style="left:1344px;top:435px;height:80px"></div>
<div class="sq" style="left:727px;top:445.0px"></div>
<div class="t num" style="left:731.8px;top:441.9px">1</div>
<div class="t obr" style="left:774.8px;top:444.6px">[</div><div class="t op" style="left:777.8px;top:445.6px;width:13px;text-align:center">A</div><div class="t obr" style="left:790.8px;top:444.6px">]</div>
<div class="t obr" style="left:803.8px;top:444.6px">[</div><div class="t op" style="left:806.8px;top:445.6px;width:13px;text-align:center">B</div><div class="t obr" style="left:819.8px;top:444.6px">]</div>
<div class="t obr" style="left:832.8px;top:444.6px">[</div><div class="t op" style="left:835.8px;top:445.6px;width:13px;text-align:center">C</div><div class="t obr" style="left:848.8px;top:444.6px">]</div>
<div class="t obr" style="left:861.8px;top:444.6px">[</div><div class="t op" style="left:864.8px;top:445.6px;width:13px;text-align:center">D</div><div class="t obr" style="left:877.8px;top:444.6px">]</div>
<div class="t num" style="left:876.8px;top:441.9px">6</div>
<div class="t obr" style="left:919.8px;top:444.6px">[</div><div class="t op" style="left:922.8px;top:445.6px;width:13px;text-align:center">A</div><div class="t obr" style="left:935.8px;top:444.6px">]</div>
<div class="t obr" style="left:948.8px;top:444.6px">[</div><div class="t op" style="left:951.8px;top:445.6px;width:13px;text-align:center">B</div><div class="t obr" style="left:964.8px;top:444.6px">]</div>
<div class="t obr" style="left:977.8px;top:444.6px">[</div><div class="t op" style="left:980.8px;top:445.6px;width:13px;text-align:center">C</div><div class="t obr" style="left:993.8px;top:444.6px">]</div>
<div class="t obr" style="left:1006.8px;top:444.6px">[</div><div class="t op" style="left:1009.8px;top:445.6px;width:13px;text-align:center">D</div><div class="t obr" style="left:1022.8px;top:444.6px">]</div>
<div class="t num" style="left:1021.8px;top:441.9px">11</div>
<div class="t obr" style="left:1064.8px;top:444.6px">[</div><div class="t op" style="left:1067.8px;top:445.6px;width:13px;text-align:center">A</div><div class="t obr" style="left:1080.8px;top:444.6px">]</div>
<div class="t obr" style="left:1093.8px;top:444.6px">[</div><div class="t op" style="left:1096.8px;top:445.6px;width:13px;text-align:center">B</div><div class="t obr" style="left:1109.8px;top:444.6px">]</div>
<div class="t obr" style="left:1122.8px;top:444.6px">[</div><div class="t op" style="left:1125.8px;top:445.6px;width:13px;text-align:center">C</div><div class="t obr" style="left:1138.8px;top:444.6px">]</div>
<div class="t obr" style="left:1151.8px;top:444.6px">[</div><div class="t op" style="left:1154.8px;top:445.6px;width:13px;text-align:center">D</div><div class="t obr" style="left:1167.8px;top:444.6px">]</div>
<div class="t num" style="left:1166.8px;top:441.9px">16</div>
<div class="t obr" style="left:1209.8px;top:444.6px">[</div><div class="t op" style="left:1212.8px;top:445.6px;width:13px;text-align:center">A</div><div class="t obr" style="left:1225.8px;top:444.6px">]</div>
<div class="t obr" style="left:1238.8px;top:444.6px">[</div><div class="t op" style="left:1241.8px;top:445.6px;width:13px;text-align:center">B</div><div class="t obr" style="left:1254.8px;top:444.6px">]</div>
<div class="t obr" style="left:1267.8px;top:444.6px">[</div><div class="t op" style="left:1270.8px;top:445.6px;width:13px;text-align:center">C</div><div class="t obr" style="left:1283.8px;top:444.6px">]</div>
<div class="t obr" style="left:1296.8px;top:444.6px">[</div><div class="t op" style="left:1299.8px;top:445.6px;width:13px;text-align:center">D</div><div class="t obr" style="left:1312.8px;top:444.6px">]</div>
<div class="sq" style="left:727px;top:459.0px"></div>
<div class="t num" style="left:731.8px;top:455.9px">2</div>
<div class="t obr" style="left:774.8px;top:458.6px">[</div><div class="t op" style="left:777.8px;top:459.6px;width:13px;text-align:center">A</div><div class="t obr" style="left:790.8px;top:458.6px">]</div>
<div class="t obr" style="left:803.8px;top:458.6px">[</div><div class="t op" style="left:806.8px;top:459.6px;width:13px;text-align:center">B</div><div class="t obr" style="left:819.8px;top:458.6px">]</div>
<div class="t obr" style="left:832.8px;top:458.6px">[</div><div class="t op" style="left:835.8px;top:459.6px;width:13px;text-align:center">C</div><div class="t obr" style="left:848.8px;top:458.6px">]</div>
<div class="t obr" style="left:861.8px;top:458.6px">[</div><div class="t op" style="left:864.8px;top:459.6px;width:13px;text-align:center">D</div><div class="t obr" style="left:877.8px;top:458.6px">]</div>
<div class="t num" style="left:876.8px;top:455.9px">7</div>
<div class="t obr" style="left:919.8px;top:458.6px">[</div><div class="t op" style="left:922.8px;top:459.6px;width:13px;text-align:center">A</div><div class="t obr" style="left:935.8px;top:458.6px">]</div>
<div class="t obr" style="left:948.8px;top:458.6px">[</div><div class="t op" style="left:951.8px;top:459.6px;width:13px;text-align:center">B</div><div class="t obr" style="left:964.8px;top:458.6px">]</div>
<div class="t obr" style="left:977.8px;top:458.6px">[</div><div class="t op" style="left:980.8px;top:459.6px;width:13px;text-align:center">C</div><div class="t obr" style="left:993.8px;top:458.6px">]</div>
<div class="t obr" style="left:1006.8px;top:458.6px">[</div><div class="t op" style="left:1009.8px;top:459.6px;width:13px;text-align:center">D</div><div class="t obr" style="left:1022.8px;top:458.6px">]</div>
<div class="t num" style="left:1021.8px;top:455.9px">12</div>
<div class="t obr" style="left:1064.8px;top:458.6px">[</div><div class="t op" style="left:1067.8px;top:459.6px;width:13px;text-align:center">A</div><div class="t obr" style="left:1080.8px;top:458.6px">]</div>
<div class="t obr" style="left:1093.8px;top:458.6px">[</div><div class="t op" style="left:1096.8px;top:459.6px;width:13px;text-align:center">B</div><div class="t obr" style="left:1109.8px;top:458.6px">]</div>
<div class="t obr" style="left:1122.8px;top:458.6px">[</div><div class="t op" style="left:1125.8px;top:459.6px;width:13px;text-align:center">C</div><div class="t obr" style="left:1138.8px;top:458.6px">]</div>
<div class="t obr" style="left:1151.8px;top:458.6px">[</div><div class="t op" style="left:1154.8px;top:459.6px;width:13px;text-align:center">D</div><div class="t obr" style="left:1167.8px;top:458.6px">]</div>
<div class="t num" style="left:1166.8px;top:455.9px">17</div>
<div class="t obr" style="left:1209.8px;top:458.6px">[</div><div class="t op" style="left:1212.8px;top:459.6px;width:13px;text-align:center">A</div><div class="t obr" style="left:1225.8px;top:458.6px">]</div>
<div class="t obr" style="left:1238.8px;top:458.6px">[</div><div class="t op" style="left:1241.8px;top:459.6px;width:13px;text-align:center">B</div><div class="t obr" style="left:1254.8px;top:458.6px">]</div>
<div class="t obr" style="left:1267.8px;top:458.6px">[</div><div class="t op" style="left:1270.8px;top:459.6px;width:13px;text-align:center">C</div><div class="t obr" style="left:1283.8px;top:458.6px">]</div>
<div class="t obr" style="left:1296.8px;top:458.6px">[</div><div class="t op" style="left:1299.8px;top:459.6px;width:13px;text-align:center">D</div><div class="t obr" style="left:1312.8px;top:458.6px">]</div>
<div class="sq" style="left:727px;top:473.0px"></div>
<div class="t num" style="left:731.8px;top:469.9px">3</div>
<div class="t obr" style="left:774.8px;top:472.6px">[</div><div class="t op" style="left:777.8px;top:473.6px;width:13px;text-align:center">A</div><div class="t obr" style="left:790.8px;top:472.6px">]</div>
<div class="t obr" style="left:803.8px;top:472.6px">[</div><div class="t op" style="left:806.8px;top:473.6px;width:13px;text-align:center">B</div><div class="t obr" style="left:819.8px;top:472.6px">]</div>
<div class="t obr" style="left:832.8px;top:472.6px">[</div><div class="t op" style="left:835.8px;top:473.6px;width:13px;text-align:center">C</div><div class="t obr" style="left:848.8px;top:472.6px">]</div>
<div class="t obr" style="left:861.8px;top:472.6px">[</div><div class="t op" style="left:864.8px;top:473.6px;width:13px;text-align:center">D</div><div class="t obr" style="left:877.8px;top:472.6px">]</div>
<div class="t num" style="left:876.8px;top:469.9px">8</div>
<div class="t obr" style="left:919.8px;top:472.6px">[</div><div class="t op" style="left:922.8px;top:473.6px;width:13px;text-align:center">A</div><div class="t obr" style="left:935.8px;top:472.6px">]</div>
<div class="t obr" style="left:948.8px;top:472.6px">[</div><div class="t op" style="left:951.8px;top:473.6px;width:13px;text-align:center">B</div><div class="t obr" style="left:964.8px;top:472.6px">]</div>
<div class="t obr" style="left:977.8px;top:472.6px">[</div><div class="t op" style="left:980.8px;top:473.6px;width:13px;text-align:center">C</div><div class="t obr" style="left:993.8px;top:472.6px">]</div>
<div class="t obr" style="left:1006.8px;top:472.6px">[</div><div class="t op" style="left:1009.8px;top:473.6px;width:13px;text-align:center">D</div><div class="t obr" style="left:1022.8px;top:472.6px">]</div>
<div class="t num" style="left:1021.8px;top:469.9px">13</div>
<div class="t obr" style="left:1064.8px;top:472.6px">[</div><div class="t op" style="left:1067.8px;top:473.6px;width:13px;text-align:center">A</div><div class="t obr" style="left:1080.8px;top:472.6px">]</div>
<div class="t obr" style="left:1093.8px;top:472.6px">[</div><div class="t op" style="left:1096.8px;top:473.6px;width:13px;text-align:center">B</div><div class="t obr" style="left:1109.8px;top:472.6px">]</div>
<div class="t obr" style="left:1122.8px;top:472.6px">[</div><div class="t op" style="left:1125.8px;top:473.6px;width:13px;text-align:center">C</div><div class="t obr" style="left:1138.8px;top:472.6px">]</div>
<div class="t obr" style="left:1151.8px;top:472.6px">[</div><div class="t op" style="left:1154.8px;top:473.6px;width:13px;text-align:center">D</div><div class="t obr" style="left:1167.8px;top:472.6px">]</div>
<div class="t num" style="left:1166.8px;top:469.9px">18</div>
<div class="t obr" style="left:1209.8px;top:472.6px">[</div><div class="t op" style="left:1212.8px;top:473.6px;width:13px;text-align:center">A</div><div class="t obr" style="left:1225.8px;top:472.6px">]</div>
<div class="t obr" style="left:1238.8px;top:472.6px">[</div><div class="t op" style="left:1241.8px;top:473.6px;width:13px;text-align:center">B</div><div class="t obr" style="left:1254.8px;top:472.6px">]</div>
<div class="t obr" style="left:1267.8px;top:472.6px">[</div><div class="t op" style="left:1270.8px;top:473.6px;width:13px;text-align:center">C</div><div class="t obr" style="left:1283.8px;top:472.6px">]</div>
<div class="t obr" style="left:1296.8px;top:472.6px">[</div><div class="t op" style="left:1299.8px;top:473.6px;width:13px;text-align:center">D</div><div class="t obr" style="left:1312.8px;top:472.6px">]</div>
<div class="sq" style="left:727px;top:487.0px"></div>
<div class="t num" style="left:731.8px;top:483.9px">4</div>
<div class="t obr" style="left:774.8px;top:486.6px">[</div><div class="t op" style="left:777.8px;top:487.6px;width:13px;text-align:center">A</div><div class="t obr" style="left:790.8px;top:486.6px">]</div>
<div class="t obr" style="left:803.8px;top:486.6px">[</div><div class="t op" style="left:806.8px;top:487.6px;width:13px;text-align:center">B</div><div class="t obr" style="left:819.8px;top:486.6px">]</div>
<div class="t obr" style="left:832.8px;top:486.6px">[</div><div class="t op" style="left:835.8px;top:487.6px;width:13px;text-align:center">C</div><div class="t obr" style="left:848.8px;top:486.6px">]</div>
<div class="t obr" style="left:861.8px;top:486.6px">[</div><div class="t op" style="left:864.8px;top:487.6px;width:13px;text-align:center">D</div><div class="t obr" style="left:877.8px;top:486.6px">]</div>
<div class="t num" style="left:876.8px;top:483.9px">9</div>
<div class="t obr" style="left:919.8px;top:486.6px">[</div><div class="t op" style="left:922.8px;top:487.6px;width:13px;text-align:center">A</div><div class="t obr" style="left:935.8px;top:486.6px">]</div>
<div class="t obr" style="left:948.8px;top:486.6px">[</div><div class="t op" style="left:951.8px;top:487.6px;width:13px;text-align:center">B</div><div class="t obr" style="left:964.8px;top:486.6px">]</div>
<div class="t obr" style="left:977.8px;top:486.6px">[</div><div class="t op" style="left:980.8px;top:487.6px;width:13px;text-align:center">C</div><div class="t obr" style="left:993.8px;top:486.6px">]</div>
<div class="t obr" style="left:1006.8px;top:486.6px">[</div><div class="t op" style="left:1009.8px;top:487.6px;width:13px;text-align:center">D</div><div class="t obr" style="left:1022.8px;top:486.6px">]</div>
<div class="t num" style="left:1021.8px;top:483.9px">14</div>
<div class="t obr" style="left:1064.8px;top:486.6px">[</div><div class="t op" style="left:1067.8px;top:487.6px;width:13px;text-align:center">A</div><div class="t obr" style="left:1080.8px;top:486.6px">]</div>
<div class="t obr" style="left:1093.8px;top:486.6px">[</div><div class="t op" style="left:1096.8px;top:487.6px;width:13px;text-align:center">B</div><div class="t obr" style="left:1109.8px;top:486.6px">]</div>
<div class="t obr" style="left:1122.8px;top:486.6px">[</div><div class="t op" style="left:1125.8px;top:487.6px;width:13px;text-align:center">C</div><div class="t obr" style="left:1138.8px;top:486.6px">]</div>
<div class="t obr" style="left:1151.8px;top:486.6px">[</div><div class="t op" style="left:1154.8px;top:487.6px;width:13px;text-align:center">D</div><div class="t obr" style="left:1167.8px;top:486.6px">]</div>
<div class="t num" style="left:1166.8px;top:483.9px">19</div>
<div class="t obr" style="left:1209.8px;top:486.6px">[</div><div class="t op" style="left:1212.8px;top:487.6px;width:13px;text-align:center">A</div><div class="t obr" style="left:1225.8px;top:486.6px">]</div>
<div class="t obr" style="left:1238.8px;top:486.6px">[</div><div class="t op" style="left:1241.8px;top:487.6px;width:13px;text-align:center">B</div><div class="t obr" style="left:1254.8px;top:486.6px">]</div>
<div class="t obr" style="left:1267.8px;top:486.6px">[</div><div class="t op" style="left:1270.8px;top:487.6px;width:13px;text-align:center">C</div><div class="t obr" style="left:1283.8px;top:486.6px">]</div>
<div class="t obr" style="left:1296.8px;top:486.6px">[</div><div class="t op" style="left:1299.8px;top:487.6px;width:13px;text-align:center">D</div><div class="t obr" style="left:1312.8px;top:486.6px">]</div>
<div class="sq" style="left:727px;top:501.0px"></div>
<div class="t num" style="left:731.8px;top:497.9px">5</div>
<div class="t obr" style="left:774.8px;top:500.6px">[</div><div class="t op" style="left:777.8px;top:501.6px;width:13px;text-align:center">A</div><div class="t obr" style="left:790.8px;top:500.6px">]</div>
<div class="t obr" style="left:803.8px;top:500.6px">[</div><div class="t op" style="left:806.8px;top:501.6px;width:13px;text-align:center">B</div><div class="t obr" style="left:819.8px;top:500.6px">]</div>
<div class="t obr" style="left:832.8px;top:500.6px">[</div><div class="t op" style="left:835.8px;top:501.6px;width:13px;text-align:center">C</div><div class="t obr" style="left:848.8px;top:500.6px">]</div>
<div class="t obr" style="left:861.8px;top:500.6px">[</div><div class="t op" style="left:864.8px;top:501.6px;width:13px;text-align:center">D</div><div class="t obr" style="left:877.8px;top:500.6px">]</div>
<div class="t num" style="left:876.8px;top:497.9px">10</div>
<div class="t obr" style="left:919.8px;top:500.6px">[</div><div class="t op" style="left:922.8px;top:501.6px;width:13px;text-align:center">A</div><div class="t obr" style="left:935.8px;top:500.6px">]</div>
<div class="t obr" style="left:948.8px;top:500.6px">[</div><div class="t op" style="left:951.8px;top:501.6px;width:13px;text-align:center">B</div><div class="t obr" style="left:964.8px;top:500.6px">]</div>
<div class="t obr" style="left:977.8px;top:500.6px">[</div><div class="t op" style="left:980.8px;top:501.6px;width:13px;text-align:center">C</div><div class="t obr" style="left:993.8px;top:500.6px">]</div>
<div class="t obr" style="left:1006.8px;top:500.6px">[</div><div class="t op" style="left:1009.8px;top:501.6px;width:13px;text-align:center">D</div><div class="t obr" style="left:1022.8px;top:500.6px">]</div>
<div class="t num" style="left:1021.8px;top:497.9px">15</div>
<div class="t obr" style="left:1064.8px;top:500.6px">[</div><div class="t op" style="left:1067.8px;top:501.6px;width:13px;text-align:center">A</div><div class="t obr" style="left:1080.8px;top:500.6px">]</div>
<div class="t obr" style="left:1093.8px;top:500.6px">[</div><div class="t op" style="left:1096.8px;top:501.6px;width:13px;text-align:center">B</div><div class="t obr" style="left:1109.8px;top:500.6px">]</div>
<div class="t obr" style="left:1122.8px;top:500.6px">[</div><div class="t op" style="left:1125.8px;top:501.6px;width:13px;text-align:center">C</div><div class="t obr" style="left:1138.8px;top:500.6px">]</div>
<div class="t obr" style="left:1151.8px;top:500.6px">[</div><div class="t op" style="left:1154.8px;top:501.6px;width:13px;text-align:center">D</div><div class="t obr" style="left:1167.8px;top:500.6px">]</div>
<div class="t num" style="left:1166.8px;top:497.9px">20</div>
<div class="t obr" style="left:1209.8px;top:500.6px">[</div><div class="t op" style="left:1212.8px;top:501.6px;width:13px;text-align:center">A</div><div class="t obr" style="left:1225.8px;top:500.6px">]</div>
<div class="t obr" style="left:1238.8px;top:500.6px">[</div><div class="t op" style="left:1241.8px;top:501.6px;width:13px;text-align:center">B</div><div class="t obr" style="left:1254.8px;top:500.6px">]</div>
<div class="t obr" style="left:1267.8px;top:500.6px">[</div><div class="t op" style="left:1270.8px;top:501.6px;width:13px;text-align:center">C</div><div class="t obr" style="left:1283.8px;top:500.6px">]</div>
<div class="t obr" style="left:1296.8px;top:500.6px">[</div><div class="t op" style="left:1299.8px;top:501.6px;width:13px;text-align:center">D</div><div class="t obr" style="left:1312.8px;top:500.6px">]</div>
<div style="left:1242px;top:441px;width:92px;height:25px;background:#05a0e6;box-shadow:1px 2px 5px rgba(0,0,0,.3)"></div>
<div class="t" style="left:1252px;top:448.5px;font-size:12px;color:#fff">设置标准答案</div>
</body></html>
